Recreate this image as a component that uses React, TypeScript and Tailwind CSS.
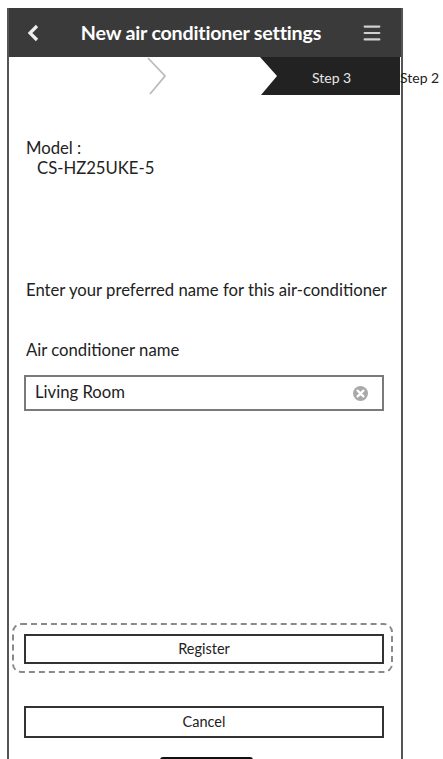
import { Menu } from 'lucide-react';

function ClearIcon() {
  return (
    <svg width="15" height="15" viewBox="0 0 15 15">
      <circle cx="7.5" cy="7.5" r="7.5" fill="#a9a9a9" />
      <path d="M4.6 4.6 L10.4 10.4 M10.4 4.6 L4.6 10.4" stroke="#fff" strokeWidth="2.2" strokeLinecap="round" />
    </svg>
  );
}

export default function App() {
  return (
    <div
      className="h-screen bg-white pl-[7px] pt-[8px] overflow-hidden text-[#222]"
      style={{ fontFamily: 'Lato, "Open Sans", sans-serif' }}
    >
      <div className="w-[396px] border-x-2 border-[#555] flex flex-col">
        {/* Header */}
        <div className="h-[49px] shrink-0 bg-[#3a3a3a] flex items-center justify-between pl-[18px] pr-[18px]">
          <svg width="12" height="18" viewBox="0 0 12 18">
            <path d="M10 2 L3 9 L10 16" fill="none" stroke="#eee" strokeWidth="3.2" />
          </svg>
          <span className="text-white font-bold text-[19.7px] tracking-[-0.2px] ml-[2px]">
            New air conditioner settings
          </span>
          <Menu className="w-[22px] h-[22px] text-[#d0d0d0]" strokeWidth={2.4} />
        </div>

        {/* Step bar */}
        <div className="h-[38px] shrink-0 relative">
          <svg className="absolute inset-0" width="391" height="38" viewBox="0 0 391 38">
            <path d="M139 1 L156 19 L141 37" fill="none" stroke="#bbb" strokeWidth="1.8" />
            <polygon points="251,0 391,0 391,38 252,38 268,19" fill="#222" />
          </svg>
          <span className="absolute left-[303px] top-[10px] text-[14px] text-[#e8e8e8]">Step 3</span>
          <span className="absolute left-[391px] top-[10px] text-[14px] text-[#222] whitespace-nowrap">Step 2</span>
        </div>

        {/* Content */}
        <div className="pl-[17px] text-[16.7px] leading-[20px]">
          <div className="mt-[43px]">Model :</div>
          <div className="pl-[11px]">CS-HZ25UKE-5</div>
          <div className="mt-[102px] whitespace-nowrap">Enter your preferred name for this air-conditioner</div>
          <div className="mt-[40px]">Air conditioner name</div>
        </div>

        <div className="mt-[15px] ml-[15px] w-[360px] h-[36px] shrink-0 border-2 border-[#7a7a7a] flex items-center justify-between pl-[9px] pr-[14px] text-[16.7px]">
          <span>Living Room</span>
          <ClearIcon />
        </div>

        <div className="mt-[212px] ml-[3px] w-[381px] h-[50px] shrink-0 border-2 border-dashed border-[#8a8a8a] rounded-[9px] pt-[9px] pl-[10px]">
          <button className="w-[360px] h-[30px] border-2 border-[#333] flex items-center justify-center text-[14.5px]">
            Register
          </button>
        </div>

        <button className="mt-[33px] ml-[15px] w-[360px] h-[32px] shrink-0 border-2 border-[#333] flex items-center justify-center text-[14.5px]">
          Cancel
        </button>

        <div className="mt-[19px] ml-[151px] w-[93px] h-[8px] shrink-0 bg-[#111] rounded-t-[3px]" />
      </div>
    </div>
  );
}
